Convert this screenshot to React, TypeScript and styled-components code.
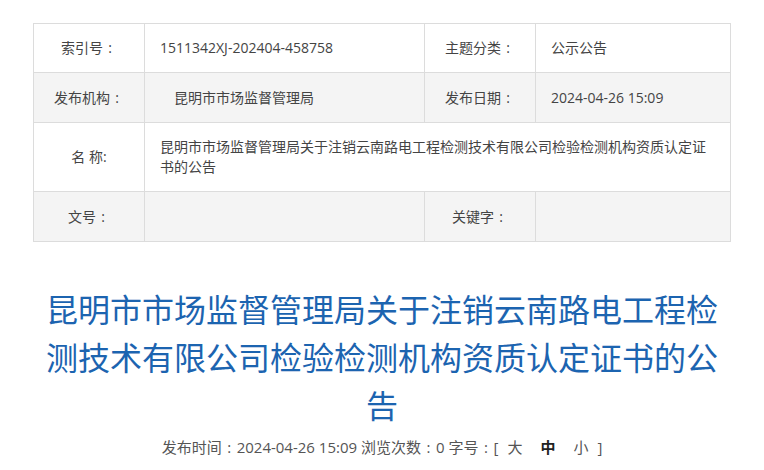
import React from "react";
import styled, { createGlobalStyle } from "styled-components";

const Global = createGlobalStyle`
  html, body { margin: 0; padding: 0; background: #fff; }
  body { font-family: "Open Sans", "Noto Sans CJK SC", sans-serif; color: #444; }
`;

const Page = styled.div`
  width: 698px;
  margin: 0 auto;
  padding-top: 23px;
`;

const InfoGrid = styled.div`
  display: grid;
  grid-template-columns: 111px 280px 111px 195px;
  grid-template-rows: 49px 50px 69px 50px;
  border-top: 1px solid #dcdcdc;
  border-left: 1px solid #dcdcdc;
`;

const Cell = styled.div<{ $gray?: boolean; $span?: number }>`
  box-sizing: border-box;
  border-right: 1px solid #dcdcdc;
  border-bottom: 1px solid #dcdcdc;
  background: ${(p) => (p.$gray ? "#f4f4f4" : "#fff")};
  grid-column: span ${(p) => p.$span ?? 1};
  display: flex;
  align-items: center;
  font-size: 14px;
  line-height: 20px;
  color: #444;
`;

const Label = styled(Cell)`
  justify-content: center;
`;

const Value = styled(Cell)<{ $indent?: number }>`
  padding: 0 16px 0 ${(p) => 15 + (p.$indent ?? 0)}px;
`;

const Colon = styled.span`
  display: inline-block;
  width: 1em;
  text-align: center;
`;

const Title = styled.h1`
  margin: 42px 0 0;
  font-family: "Noto Sans CJK SC", sans-serif;
  font-size: 32px;
  line-height: 48px;
  font-weight: normal;
  text-align: center;
  color: #1c64b0;
`;

const Meta = styled.div`
  margin-top: 9px;
  font-size: 15px;
  line-height: 20px;
  text-align: center;
  color: #555;
`;

const SizeLink = styled.span<{ $active?: boolean }>`
  margin: 0 9px;
  color: ${(p) => (p.$active ? "#222" : "#555")};
  font-weight: ${(p) => (p.$active ? "bold" : "normal")};
`;

const C = () => <Colon>:</Colon>;

export default function App() {
  return (
    <>
      <Global />
      <Page>
        <InfoGrid>
          <Label>索引号<C /></Label>
          <Value>1511342XJ-202404-458758</Value>
          <Label>主题分类<C /></Label>
          <Value>公示公告</Value>

          <Label $gray>发布机构<C /></Label>
          <Value $gray $indent={14}>昆明市市场监督管理局</Value>
          <Label $gray>发布日期<C /></Label>
          <Value $gray>2024-04-26 15:09</Value>

          <Label>名 称:</Label>
          <Value $span={3}>
            昆明市市场监督管理局关于注销云南路电工程检测技术有限公司检验检测机构资质认定证书的公告
          </Value>

          <Label $gray>文号<C /></Label>
          <Value $gray />
          <Label $gray>关键字<C /></Label>
          <Value $gray />
        </InfoGrid>

        <Title>
          昆明市市场监督管理局关于注销云南路电工程检测技术有限公司检验检测机构资质认定证书的公告
        </Title>

        <Meta>
          发布时间<C />2024-04-26 15:09 浏览次数<C />0 字号<C />[
          <SizeLink>大</SizeLink>
          <SizeLink $active>中</SizeLink>
          <SizeLink>小</SizeLink>]
        </Meta>
      </Page>
    </>
  );
}
